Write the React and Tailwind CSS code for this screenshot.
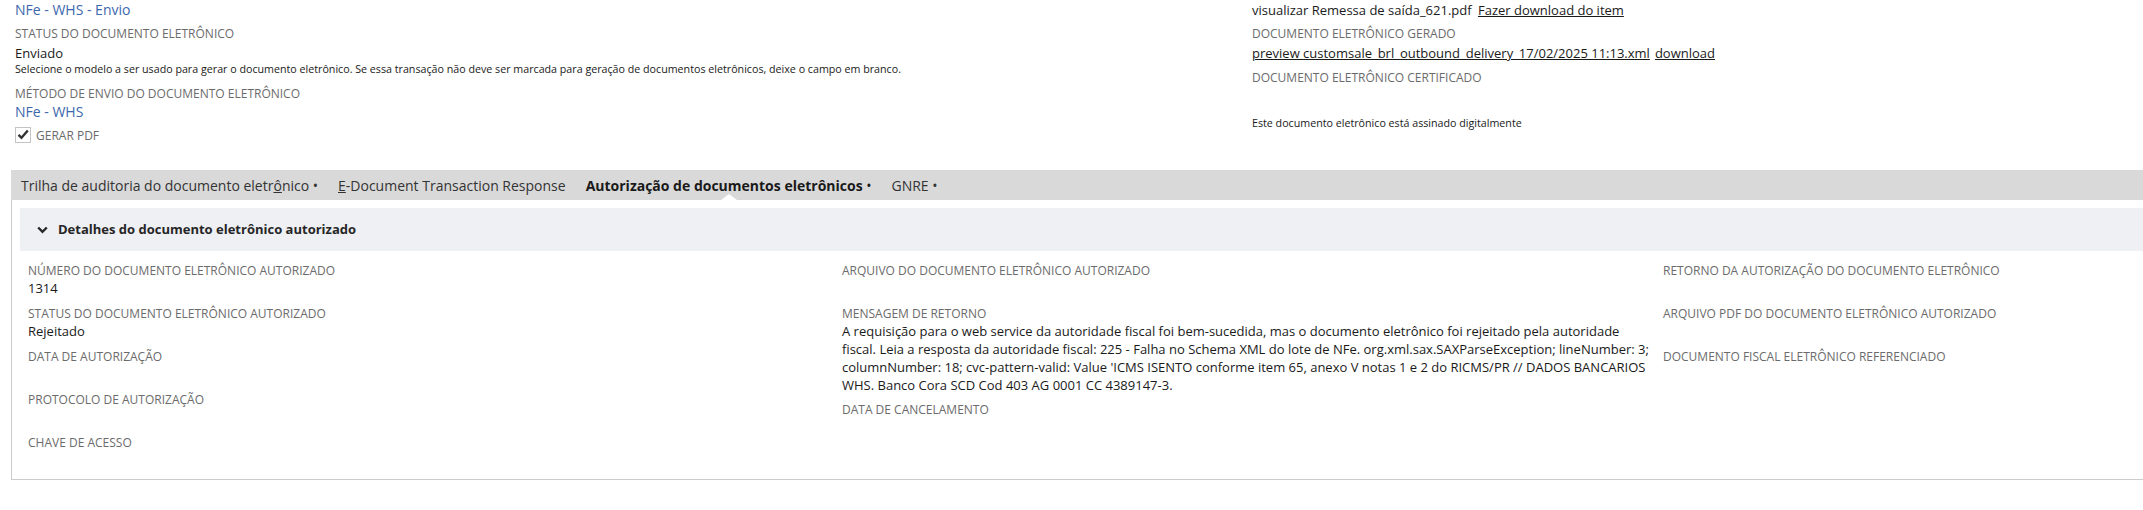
import React from "react";

const Label = ({ children, className = "" }) => (
  <div className={"text-[12px] leading-[17px] uppercase text-[#6b6b6b] whitespace-nowrap " + className}>{children}</div>
);

const Field = ({ label, value, className = "" }) => (
  <div className={"mb-[8px] " + className}>
    <Label>{label}</Label>
    <div className="text-[13px] leading-[18px] min-h-[18px] text-[#1a1a1a] whitespace-nowrap">{value}</div>
  </div>
);

export default function App() {
  return (
    <div className="w-[2143px] h-[510px] overflow-hidden bg-white font-['Open_Sans',sans-serif] text-[#1a1a1a]">
      {/* Top section */}
      <div className="flex h-[170px]">
        <div className="w-[1252px] pl-[15px] pt-[1px]">
          <div className="text-[14px] leading-[18px] text-[#3d68ad]">NFe - WHS - Envio</div>
          <div className="mt-[7px] text-[12px] leading-[16px] uppercase text-[#6b6b6b]">Status do documento eletrônico</div>
          <div className="mt-[2px] text-[13px] leading-[18px]">Enviado</div>
          <div className="text-[10.7px] leading-[15px] whitespace-nowrap">
            Selecione o modelo a ser usado para gerar o documento eletrônico. Se essa transação não deve ser marcada para geração de documentos eletrônicos, deixe o campo em branco.
          </div>
          <div className="mt-[9px] text-[12px] leading-[16px] uppercase text-[#6b6b6b]">Método de envio do documento eletrônico</div>
          <div className="mt-[1px] text-[14px] leading-[18px] text-[#3d68ad]">NFe - WHS</div>
          <div className="mt-[4px] flex items-center">
            <div className="w-[16px] h-[16px] border border-[#c4c4c4] bg-white flex items-center justify-center">
              <svg width="12" height="11" viewBox="0 0 12 11">
                <path d="M1.5 5.8 L4.5 8.8 L10.8 1.5" fill="none" stroke="#333" strokeWidth="2.4" />
              </svg>
            </div>
            <span className="ml-[5px] mt-[3px] text-[12px] leading-[16px] uppercase text-[#6b6b6b]">Gerar PDF</span>
          </div>
        </div>
        <div className="flex-1 pt-[1px]">
          <div className="text-[13px] leading-[18px] whitespace-nowrap">
            visualizar Remessa de saída_621.pdf <span className="ml-[3px] underline">Fazer download do item</span>
          </div>
          <div className="mt-[7px] text-[12px] leading-[16px] uppercase text-[#6b6b6b]">Documento eletrônico gerado</div>
          <div className="mt-[2px] text-[13px] leading-[18px] whitespace-nowrap">
            <span className="underline">preview customsale_brl_outbound_delivery_17/02/2025 11:13.xml</span>
            <span className="ml-[5px] underline">download</span>
          </div>
          <div className="mt-[8px] text-[12px] leading-[16px] uppercase text-[#6b6b6b]">Documento eletrônico certificado</div>
          <div className="mt-[30px] text-[10.7px] leading-[15px]">Este documento eletrônico está assinado digitalmente</div>
        </div>
      </div>

      {/* Tab bar */}
      <div className="ml-[11px] h-[30px] bg-[#d9d9d9] flex items-stretch text-[14px] text-[#333]">
        <div className="px-[10px] flex items-center whitespace-nowrap">
          Trilha de auditoria do documento eletr<span className="underline">ô</span>nico&nbsp;•
        </div>
        <div className="px-[10px] flex items-center whitespace-nowrap">
          <span className="underline">E</span>-Document Transaction Response
        </div>
        <div className="relative px-[10px] flex items-center whitespace-nowrap font-bold text-[#1a1a1a]">
          Autorização de documentos eletrônicos&nbsp;<span className="font-normal">•</span>
          <div className="absolute bottom-0 left-1/2 -translate-x-1/2 w-0 h-0 border-l-[8px] border-r-[8px] border-b-[6px] border-l-transparent border-r-transparent border-b-white"></div>
        </div>
        <div className="px-[10px] flex items-center whitespace-nowrap">GNRE&nbsp;•</div>
      </div>

      {/* Panel */}
      <div className="ml-[11px] border-l border-b border-[#cccccc] pl-[8px] pt-[8px] pb-[2px]">
        <div className="h-[43px] bg-[#eff0f4] flex items-center pl-[17px]">
          <svg width="11" height="8" viewBox="0 0 11 8">
            <path d="M1.2 1.5 L5.5 5.8 L9.8 1.5" fill="none" stroke="#262626" strokeWidth="2.4" />
          </svg>
          <span className="ml-[10px] text-[13px] font-bold text-[#262626]">Detalhes do documento eletrônico autorizado</span>
        </div>
        <div className="pt-[11px] pl-[8px] grid grid-cols-[814px_821px_1fr]">
          <div>
            <Field label="Número do documento eletrônico autorizado" value="1314" />
            <Field label="Status do documento eletrônico autorizado" value="Rejeitado" />
            <Field label="Data de autorização" value="" />
            <Field label="Protocolo de autorização" value="" />
            <Field label="Chave de acesso" value="" />
          </div>
          <div>
            <Field label="Arquivo do documento eletrônico autorizado" value="" />
            <div className="mb-[7px]">
              <Label>Mensagem de retorno</Label>
              <div className="text-[13px] leading-[18px] text-[#1a1a1a] whitespace-nowrap">
                <div>A requisição para o web service da autoridade fiscal foi bem-sucedida, mas o documento eletrônico foi rejeitado pela autoridade</div>
                <div>fiscal. Leia a resposta da autoridade fiscal: 225 - Falha no Schema XML do lote de NFe. org.xml.sax.SAXParseException; lineNumber: 3;</div>
                <div>columnNumber: 18; cvc-pattern-valid: Value 'ICMS ISENTO conforme item 65, anexo V notas 1 e 2 do RICMS/PR // DADOS BANCARIOS</div>
                <div>WHS. Banco Cora SCD Cod 403 AG 0001 CC 4389147-3.</div>
              </div>
            </div>
            <Field label="Data de cancelamento" value="" />
          </div>
          <div>
            <Field label="Retorno da autorização do documento eletrônico" value="" />
            <Field label="Arquivo PDF do documento eletrônico autorizado" value="" />
            <Field label="Documento fiscal eletrônico referenciado" value="" />
          </div>
        </div>
      </div>
    </div>
  );
}
